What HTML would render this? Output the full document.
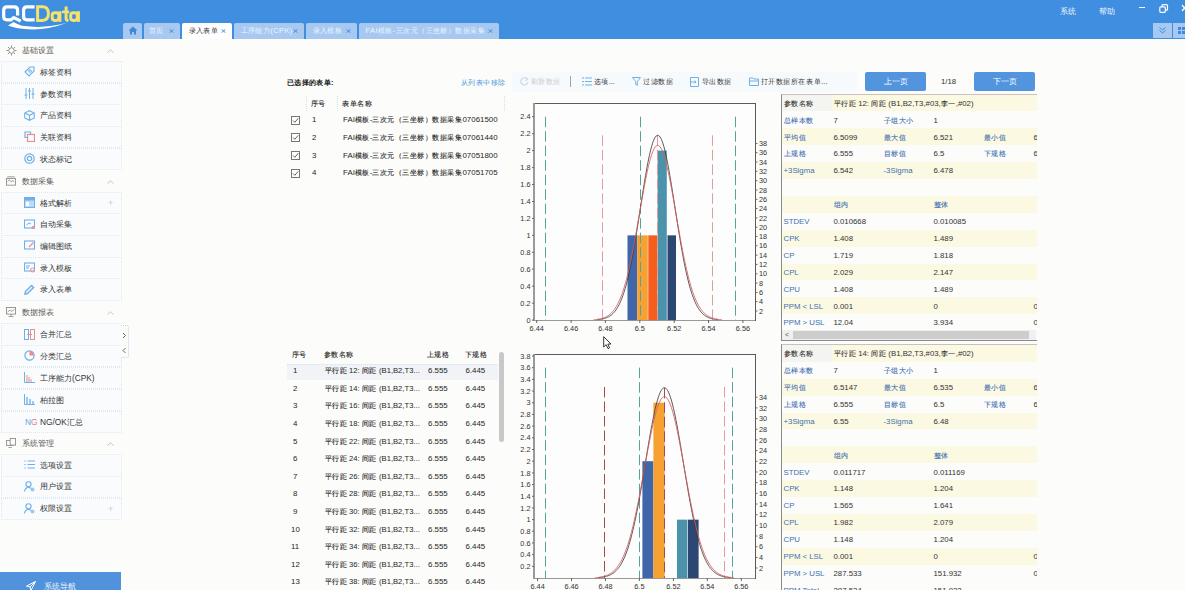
<!DOCTYPE html>
<html><head><meta charset="utf-8">
<style>
*{box-sizing:border-box;margin:0;padding:0}
html,body{width:1185px;height:590px;overflow:hidden;background:#fcfcfa;font-family:"Liberation Sans",sans-serif;color:#333;font-size:7.5px}
.a{position:absolute;white-space:nowrap;line-height:1}
#hdr{position:absolute;left:0;top:0;width:1185px;height:38.5px;background:#3f8ee0}
.tab{position:absolute;top:22.5px;height:16px;background:#a7c9f1;color:#eef5fd;font-size:7.4px;letter-spacing:0.45px;line-height:16px;padding-left:6.5px;border-radius:2px 2px 0 0;white-space:nowrap}
.tab .x{position:absolute;right:6.5px;top:6.5px;width:5px;height:4px}
.tab.act{background:#fff;color:#333}
.sh{position:absolute;left:0;width:122px;height:22px;font-size:8.3px;color:#555;line-height:22px;white-space:nowrap}
.si{position:absolute;left:1px;width:121px;height:22.6px;font-size:8.3px;color:#333;line-height:22px;white-space:nowrap;border:1px dotted #dfe8f3;background:#fafbfd}
.sic{position:absolute;left:21.5px;top:4.3px;width:11px;height:11px}
.sit{position:absolute;left:38px;top:-1.2px}
.chev{position:absolute;left:106px;top:0;color:#aaa;font-size:8px}
.tb{position:absolute;white-space:nowrap;line-height:1;font-size:7.4px;color:#333}
.btn{position:absolute;top:72px;height:19px;width:61px;background:#5295de;border-radius:2px;color:#fff;font-size:7.8px;line-height:19px;text-align:center}
.t1{position:absolute;white-space:nowrap;line-height:1;font-size:7.9px;color:#262626}
.t1 .c{font-size:7.4px;letter-spacing:0.5px;-webkit-text-stroke:0.12px currentColor}
.pl .c,.pv .c{font-size:7.4px;letter-spacing:0.5px;-webkit-text-stroke:0.1px currentColor}
.tb .c{font-size:7.4px;letter-spacing:0.6px}
.pl{position:absolute;white-space:nowrap;line-height:1;font-size:7.8px;color:#3d70b0}
.pv{position:absolute;white-space:nowrap;line-height:1;font-size:7.8px;color:#333}
</style></head><body>
<div id="hdr"><svg style="position:absolute;left:0;top:0" width="90" height="36" viewBox="0 0 90 36">
<path d="M17.6 15.5 V10.2 Q17.6 6.9 14.3 6.9 H7 Q3.7 6.9 3.7 10.2 V16.6 Q3.7 19.9 7 19.9 H10.8 L13.8 17.6 L20.8 21.2" fill="none" stroke="#fff" stroke-width="3.2" stroke-linejoin="round"/>
<path d="M34.6 6.9 H26.9 Q23.6 6.9 23.6 10.2 V16.6 Q23.6 19.9 26.9 19.9 H34.6" fill="none" stroke="#fff" stroke-width="3.2"/>
<path d="M8 25.6 L13.5 22 Q16 23.5 22 25.8 Q45 29 67 22.8 Q48 30.2 28 29.3 Q15 28.6 8 25.6 Z" fill="#fff"/>
<path d="M37.6 6.7 H42.3 Q48.4 6.7 48.4 13.5 Q48.4 20.4 42.3 20.4 H37.6 Z" fill="none" stroke="#f3e36b" stroke-width="3"/>
<rect x="52.2" y="12.7" width="6.6" height="7.7" rx="2.6" fill="none" stroke="#f3e36b" stroke-width="3"/>
<rect x="58.5" y="11.2" width="2.9" height="10.7" fill="#f3e36b"/>
<path d="M66.1 6.6 V18.5 Q66.1 20.4 68.5 20.6" fill="none" stroke="#f3e36b" stroke-width="3"/>
<rect x="62" y="10.6" width="7.2" height="2.6" fill="#f3e36b"/>
<rect x="70.7" y="12.7" width="6.6" height="7.7" rx="2.6" fill="none" stroke="#f3e36b" stroke-width="3"/>
<rect x="77" y="11.2" width="2.9" height="10.7" fill="#f3e36b"/>
</svg><div class="tab" style="left:123px;width:19px;padding:0"><svg style="position:absolute;left:5px;top:3px" width="10" height="9" viewBox="0 0 10 9"><path d="M5 0.5 L0.5 4.5 H2 V8.5 H4 V6 H6 V8.5 H8 V4.5 H9.5 Z" fill="#3f89dc"/></svg></div><div class="tab" style="left:144px;width:36px;padding-left:4.6px">首页<svg class="x" viewBox="0 0 5 4"><path d="M0.5 0.3 L4.5 3.7 M4.5 0.3 L0.5 3.7" stroke="#3f89dc" stroke-width="0.9"/></svg></div><div class="tab act" style="left:182px;width:50px">录入表单<svg class="x" viewBox="0 0 5 4"><path d="M0.5 0.3 L4.5 3.7 M4.5 0.3 L0.5 3.7" stroke="#3f89dc" stroke-width="0.9"/></svg></div><div class="tab" style="left:234px;width:70px">工序能力(CPK)<svg class="x" viewBox="0 0 5 4"><path d="M0.5 0.3 L4.5 3.7 M4.5 0.3 L0.5 3.7" stroke="#3f89dc" stroke-width="0.9"/></svg></div><div class="tab" style="left:306px;width:51px">录入模板<svg class="x" viewBox="0 0 5 4"><path d="M0.5 0.3 L4.5 3.7 M4.5 0.3 L0.5 3.7" stroke="#3f89dc" stroke-width="0.9"/></svg></div><div class="tab" style="left:359px;width:140px">FAI模板-三次元（三坐标）数据采集<svg class="x" viewBox="0 0 5 4"><path d="M0.5 0.3 L4.5 3.7 M4.5 0.3 L0.5 3.7" stroke="#3f89dc" stroke-width="0.9"/></svg></div><div class="a" style="left:1060px;top:7px;color:#f4f8fd;font-size:8.3px">系统</div><div class="a" style="left:1099px;top:7px;color:#f4f8fd;font-size:8.3px">帮助</div><div style="position:absolute;left:1139px;top:7px;width:6px;height:1px;background:#fff"></div><svg style="position:absolute;left:1159px;top:4px" width="10" height="9" viewBox="0 0 10 9"><rect x="3" y="0.7" width="5.5" height="5.5" rx="1" fill="none" stroke="#fff" stroke-width="1.2"/><rect x="0.8" y="2.8" width="5.5" height="5.5" rx="1" fill="#3f8ee0" stroke="#fff" stroke-width="1.2"/></svg><svg style="position:absolute;left:1181px;top:4px" width="6" height="8" viewBox="0 0 6 8"><path d="M1 1 L6 7 M6 1 L1 7" stroke="#fff" stroke-width="1.2"/></svg><div style="position:absolute;left:1153px;top:23px;width:19px;height:15px;background:#a7c9f1"><svg style="position:absolute;left:6px;top:4px" width="7" height="7" viewBox="0 0 7 7"><path d="M0.5 0.5 L3.5 3 L6.5 0.5 M0.5 3.5 L3.5 6 L6.5 3.5" fill="none" stroke="#3f89dc" stroke-width="1"/></svg></div><div style="position:absolute;left:1173px;top:23px;width:14px;height:15px;background:#a7c9f1"><svg style="position:absolute;left:5px;top:4px" width="8" height="8"><rect x="0" y="0" width="3" height="3" fill="#3f89dc"/><rect x="4" y="0" width="3" height="3" fill="#3f89dc"/><rect x="0" y="4" width="3" height="3" fill="#3f89dc"/><rect x="4" y="4" width="3" height="3" fill="#3f89dc"/></svg></div></div><div class="sh" style="top:39px"><svg class="sic" style="left:5.5px;top:6px;width:11px;height:11px" viewBox="0 0 12 12"><circle cx="6" cy="6" r="3" fill="none" stroke="#888" stroke-width="1"/><path d="M6 0.5V2.5M6 9.5V11.5M0.5 6H2.5M9.5 6H11.5M2.1 2.1L3.5 3.5M8.5 8.5L9.9 9.9M2.1 9.9L3.5 8.5M8.5 3.5L9.9 2.1" stroke="#888" stroke-width="1"/></svg><span style="position:absolute;left:22px;top:0">基础设置</span><svg style="position:absolute;left:106.5px;top:9.5px" width="7" height="4" viewBox="0 0 7 4"><path d="M0.5 3.5 L3.5 0.8 L6.5 3.5" fill="none" stroke="#c4c4c4" stroke-width="1"/></svg></div><div class="si" style="top:60.7px"><svg class="sic" viewBox="0 0 11 11"><path d="M1 6 L6 1 H10 V5 L5 10 Z" fill="none" stroke="#6eb0e8" stroke-width="1.1"/><circle cx="6" cy="5" r="1.3" fill="none" stroke="#6eb0e8"/></svg><span class="sit">标签资料</span></div><div class="si" style="top:82.7px"><svg class="sic" viewBox="0 0 11 11"><path d="M2 0V11M5.5 0V11M9 0V11" stroke="#6eb0e8" stroke-width="1"/><path d="M0.5 7H3.5M4 3H7M7.5 6H10.5" stroke="#6eb0e8" stroke-width="1.2"/></svg><span class="sit">参数资料</span></div><div class="si" style="top:104.3px"><svg class="sic" viewBox="0 0 11 11"><path d="M5.5 0.7 L10.3 3 V8 L5.5 10.3 L0.7 8 V3 Z M0.7 3 L5.5 5.3 L10.3 3 M5.5 5.3 V10.3" fill="none" stroke="#6eb0e8" stroke-width="1.1"/></svg><span class="sit">产品资料</span></div><div class="si" style="top:125.7px"><svg class="sic" viewBox="0 0 11 11"><path d="M6.5 3 V1 H1 V6.5 H3" fill="none" stroke="#6eb0e8" stroke-width="1.2"/><rect x="3.5" y="3.5" width="7" height="7" fill="none" stroke="#e88e8e" stroke-width="1.2"/></svg><span class="sit">关联资料</span></div><div class="si" style="top:147.7px"><svg class="sic" viewBox="0 0 11 11"><circle cx="5.5" cy="5.5" r="4.7" fill="none" stroke="#6eb0e8" stroke-width="1.2"/><circle cx="5.5" cy="5.5" r="2.2" fill="none" stroke="#6eb0e8" stroke-width="1.2"/></svg><span class="sit">状态标记</span></div><div class="sh" style="top:170.4px"><svg class="sic" style="left:6px;top:6px;width:10px;height:10px" viewBox="0 0 12 11"><rect x="0.5" y="2.5" width="11" height="8" fill="none" stroke="#888"/><path d="M1.5 0.5H10.5M2 6 L4 4 L6 6.5 L8 5 L10 6.5" fill="none" stroke="#888"/></svg><span style="position:absolute;left:22px;top:0">数据采集</span><svg style="position:absolute;left:106.5px;top:9.5px" width="7" height="4" viewBox="0 0 7 4"><path d="M0.5 3.5 L3.5 0.8 L6.5 3.5" fill="none" stroke="#c4c4c4" stroke-width="1"/></svg></div><div class="si" style="top:191.7px"><svg class="sic" viewBox="0 0 11 11"><rect x="0.5" y="0.5" width="10" height="10" fill="#bcdcf5" stroke="#6eb0e8"/><rect x="0.5" y="0.5" width="10" height="3" fill="#6eb0e8"/><rect x="2" y="5" width="3" height="4" fill="#fff"/></svg><span class="sit">格式解析</span><span style="position:absolute;left:106px;top:-1px;color:#ccc;font-size:9px">+</span></div><div class="si" style="top:213.39999999999998px"><svg class="sic" viewBox="0 0 11 11"><rect x="0.5" y="1" width="10" height="8" fill="none" stroke="#6eb0e8" stroke-width="1.1"/><path d="M2.5 6 L5 4 L7 5" stroke="#6eb0e8" fill="none"/><circle cx="9" cy="8.5" r="1.6" fill="#e88e8e"/></svg><span class="sit">自动采集</span></div><div class="si" style="top:235.0px"><svg class="sic" viewBox="0 0 11 11"><rect x="0.5" y="1" width="10" height="8" fill="none" stroke="#6eb0e8" stroke-width="1.1"/><path d="M5 7 L9.5 2.5" stroke="#e88e8e" stroke-width="1.2"/></svg><span class="sit">编辑图纸</span></div><div class="si" style="top:256.7px"><svg class="sic" viewBox="0 0 11 11"><rect x="0.5" y="1" width="10" height="8" fill="none" stroke="#6eb0e8" stroke-width="1.1"/><path d="M2 4H6M2 6H5" stroke="#6eb0e8"/><circle cx="8.5" cy="8" r="2" fill="none" stroke="#e88e8e"/></svg><span class="sit">录入模板</span></div><div class="si" style="top:278.3px"><svg class="sic" viewBox="0 0 11 11"><path d="M1 10 L1.5 7.5 L7.5 1.5 L9.5 3.5 L3.5 9.5 Z" fill="none" stroke="#6eb0e8" stroke-width="1.5"/></svg><span class="sit">录入表单</span></div><div class="sh" style="top:301px"><svg class="sic" style="left:6px;top:6px;width:10px;height:10px" viewBox="0 0 12 12"><rect x="0.5" y="0.5" width="11" height="8" fill="none" stroke="#888"/><path d="M6 8.5V11M3 11.5H9M2 6L5 3.5L7 5.5L10 2.5" fill="none" stroke="#888"/></svg><span style="position:absolute;left:22px;top:0">数据报表</span><svg style="position:absolute;left:106.5px;top:9.5px" width="7" height="4" viewBox="0 0 7 4"><path d="M0.5 3.5 L3.5 0.8 L6.5 3.5" fill="none" stroke="#c4c4c4" stroke-width="1"/></svg></div><div class="si" style="top:323.4px"><svg class="sic" viewBox="0 0 11 11"><rect x="0.5" y="0.5" width="4" height="10" fill="none" stroke="#6eb0e8"/><rect x="6.5" y="0.5" width="4" height="10" fill="none" stroke="#e88e8e"/><path d="M3 5.5H8" stroke="#e88e8e"/></svg><span class="sit">合并汇总</span></div><div class="si" style="top:344.7px"><svg class="sic" viewBox="0 0 11 11"><circle cx="5.5" cy="5.5" r="4.6" fill="none" stroke="#6eb0e8" stroke-width="1.2"/><path d="M5.5 5.5 V0.9 A4.6 4.6 0 0 1 10.1 5.5 Z" fill="#e88e8e"/></svg><span class="sit">分类汇总</span></div><div class="si" style="top:366.7px"><svg class="sic" viewBox="0 0 11 11"><path d="M0.5 0 V10.5 H11" fill="none" stroke="#6eb0e8"/><path d="M3 10V3M5 10V5M7 10V7" stroke="#e88e8e"/></svg><span class="sit">工序能力(CPK)</span></div><div class="si" style="top:388.7px"><svg class="sic" viewBox="0 0 11 11"><path d="M0.5 0 V10.5 H11" fill="none" stroke="#6eb0e8"/><rect x="2" y="3" width="2" height="7" fill="#9cc8ef"/><rect x="5" y="5" width="2" height="5" fill="#9cc8ef"/><rect x="8" y="7" width="2" height="3" fill="#9cc8ef"/></svg><span class="sit">柏拉图</span></div><div class="si" style="top:410.7px"><span style="position:absolute;left:23px;top:-1.2px;font-size:8.3px;color:#5aa6e6">N<span style="color:#e57a7a">G</span></span><span class="sit">NG/OK汇总</span></div><div class="sh" style="top:432.4px"><svg class="sic" style="left:6px;top:6px;width:10px;height:10px" viewBox="0 0 12 12"><rect x="0.5" y="3" width="8" height="6" fill="none" stroke="#888"/><rect x="5" y="0.5" width="6.5" height="8" fill="#fcfcfa" stroke="#888"/><path d="M3 11.5H7" stroke="#888"/></svg><span style="position:absolute;left:22px;top:0">系统管理</span><svg style="position:absolute;left:106.5px;top:9.5px" width="7" height="4" viewBox="0 0 7 4"><path d="M0.5 3.5 L3.5 0.8 L6.5 3.5" fill="none" stroke="#c4c4c4" stroke-width="1"/></svg></div><div class="si" style="top:454.09999999999997px"><svg class="sic" viewBox="0 0 11 11"><path d="M0 2H2M0 5.5H2M0 9H2" stroke="#9cc8ef" stroke-width="1.2"/><path d="M3.5 2H11M3.5 5.5H11M3.5 9H11" stroke="#6eb0e8" stroke-width="1.2"/></svg><span class="sit">选项设置</span></div><div class="si" style="top:475.5px"><svg class="sic" viewBox="0 0 11 11"><circle cx="4.5" cy="3.3" r="2.6" fill="none" stroke="#6eb0e8" stroke-width="1.1"/><path d="M0.5 10.5 Q1 6.5 4.5 6.5 Q6 6.5 7 7.3" fill="none" stroke="#6eb0e8" stroke-width="1.1"/><circle cx="8.5" cy="8.5" r="2" fill="#9cc8ef"/></svg><span class="sit">用户设置</span></div><div class="si" style="top:497.5px"><svg class="sic" viewBox="0 0 11 11"><circle cx="4.5" cy="3.3" r="2.6" fill="none" stroke="#6eb0e8" stroke-width="1.1"/><path d="M0.5 10.5 Q1 6.5 4.5 6.5 Q6 6.5 7 7.3" fill="none" stroke="#6eb0e8" stroke-width="1.1"/><circle cx="8.5" cy="8.5" r="2" fill="#9cc8ef"/></svg><span class="sit">权限设置</span><span style="position:absolute;left:106px;top:-1px;color:#ccc;font-size:9px">+</span></div><div style="position:absolute;left:121px;top:325px;width:8px;height:33px;border:1px dotted #bcd3ea;border-left:none;background:#fcfcfa;border-radius:0 2px 2px 0"><svg style="position:absolute;left:1px;top:6px" width="5" height="22" viewBox="0 0 5 22"><path d="M1 1 L3.5 3.5 L1 6" fill="none" stroke="#666"/><path d="M3.5 16 L1 18.5 L3.5 21" fill="none" stroke="#666"/></svg></div><div style="position:absolute;left:0;top:571.8px;width:121px;height:19px;background:#5093dc"><svg style="position:absolute;left:26px;top:9.5px" width="10" height="10" viewBox="0 0 10 10"><path d="M9.5 0.5 L0.5 5 L4 6 L5 9.5 Z M4 6 L9.5 0.5" fill="none" stroke="#fff" stroke-width="1"/></svg><span class="a" style="left:44px;top:10.5px;color:#eef5fd;font-size:8.3px">系统导航</span></div><div class="a" style="left:287px;top:79px;font-size:7.4px;letter-spacing:0.35px;font-weight:bold;color:#222">已选择的表单<span style="letter-spacing:0">:</span></div><div class="a" style="left:460.5px;top:79px;font-size:7.4px;letter-spacing:0.55px;color:#4a9ae0">从列表中移除</div><div style="position:absolute;left:512px;top:72px;width:345px;height:20px;background:#f7fafd"></div><svg style="position:absolute;left:520px;top:77px" width="9" height="9" viewBox="0 0 9 9"><path d="M7.5 2.5 A3.6 3.6 0 1 0 8 5" fill="none" stroke="#c5d6ea" stroke-width="1.1"/><path d="M6 0.5 L8 2.5 L5.5 3.5" fill="none" stroke="#c5d6ea" stroke-width="1"/></svg><div class="tb" style="left:530.5px;top:78px;color:#ccc"><span class="c">刷新数据</span></div><div style="position:absolute;left:570px;top:76px;width:1px;height:11px;background:#9aa6b3"></div><svg style="position:absolute;left:581.5px;top:77px" width="10" height="9" viewBox="0 0 10 9"><path d="M0 1H2M0 4.5H2M0 8H2M3 1H10M3 4.5H10M3 8H10" stroke="#6eb0e8" stroke-width="1.1"/></svg><div class="tb" style="left:593.5px;top:78px"><span class="c">选项</span>...</div><svg style="position:absolute;left:631.5px;top:77px" width="9" height="9" viewBox="0 0 9 9"><path d="M0.5 0.5 H8.5 L5.3 4.5 V8.5 L3.7 7.5 V4.5 Z" fill="none" stroke="#6eb0e8" stroke-width="1"/></svg><div class="tb" style="left:643px;top:78px"><span class="c">过滤数据</span></div><svg style="position:absolute;left:690px;top:76.5px" width="9" height="10" viewBox="0 0 9 10"><path d="M0.5 0.5 H8.5 V9.5 H0.5 Z M0.5 5 H6 M4.5 3.5 L6 5 L4.5 6.5" fill="none" stroke="#6eb0e8" stroke-width="1"/></svg><div class="tb" style="left:701.5px;top:78px"><span class="c">导出数据</span></div><svg style="position:absolute;left:748.5px;top:77px" width="10" height="9" viewBox="0 0 10 9"><path d="M0.5 1 H4 L5 2 H9.5 V8.5 H0.5 Z M0.5 4 H9.5" fill="none" stroke="#6eb0e8" stroke-width="1"/></svg><div class="tb" style="left:760.5px;top:78px"><span class="c">打开数据所在表单</span>...</div><div class="btn" style="left:865px">上一页</div><div class="tb" style="left:941px;top:78px;font-size:7.8px">1/18</div><div class="btn" style="left:974px">下一页</div><div style="position:absolute;left:306px;top:96px;height:15px;border-left:1px dotted #cfe0f2"></div><div style="position:absolute;left:337px;top:96px;height:15px;border-left:1px dotted #cfe0f2"></div><div style="position:absolute;left:504px;top:96px;height:15px;border-left:1px dotted #cfe0f2"></div><div class="t1" style="left:310.5px;top:100px"><span class="c">序号</span></div><div class="t1" style="left:342px;top:100px"><span class="c">表单名称</span></div><svg style="position:absolute;left:291px;top:115.7px" width="9" height="9" viewBox="0 0 9 9"><rect x="0.5" y="0.5" width="8" height="8" fill="#fff" stroke="#777" stroke-width="1"/><path d="M2 4.5 L3.8 6.3 L7.3 2.3" fill="none" stroke="#555" stroke-width="0.9"/></svg><div class="t1" style="left:312px;top:116.4px">1</div><div class="t1" style="left:343px;top:116.4px">FAI<span class="c">模板</span>-<span class="c">三次元（三坐标）数据采集</span>07061500</div><svg style="position:absolute;left:291px;top:133.3px" width="9" height="9" viewBox="0 0 9 9"><rect x="0.5" y="0.5" width="8" height="8" fill="#fff" stroke="#777" stroke-width="1"/><path d="M2 4.5 L3.8 6.3 L7.3 2.3" fill="none" stroke="#555" stroke-width="0.9"/></svg><div class="t1" style="left:312px;top:134.0px">2</div><div class="t1" style="left:343px;top:134.0px">FAI<span class="c">模板</span>-<span class="c">三次元（三坐标）数据采集</span>07061440</div><svg style="position:absolute;left:291px;top:150.9px" width="9" height="9" viewBox="0 0 9 9"><rect x="0.5" y="0.5" width="8" height="8" fill="#fff" stroke="#777" stroke-width="1"/><path d="M2 4.5 L3.8 6.3 L7.3 2.3" fill="none" stroke="#555" stroke-width="0.9"/></svg><div class="t1" style="left:312px;top:151.6px">3</div><div class="t1" style="left:343px;top:151.6px">FAI<span class="c">模板</span>-<span class="c">三次元（三坐标）数据采集</span>07051800</div><svg style="position:absolute;left:291px;top:168.5px" width="9" height="9" viewBox="0 0 9 9"><rect x="0.5" y="0.5" width="8" height="8" fill="#fff" stroke="#777" stroke-width="1"/><path d="M2 4.5 L3.8 6.3 L7.3 2.3" fill="none" stroke="#555" stroke-width="0.9"/></svg><div class="t1" style="left:312px;top:169.2px">4</div><div class="t1" style="left:343px;top:169.2px">FAI<span class="c">模板</span>-<span class="c">三次元（三坐标）数据采集</span>07051705</div><div class="t1" style="left:291.5px;top:350.5px"><span class="c">序号</span></div><div class="t1" style="left:323.5px;top:350.5px"><span class="c">参数名称</span></div><div class="t1" style="left:426.5px;top:350.5px"><span class="c">上规格</span></div><div class="t1" style="left:464.5px;top:350.5px"><span class="c">下规格</span></div><div style="position:absolute;left:287px;top:364px;width:211px;height:16px;background:#f1f3f7;border-top:1px dotted #d5e3f0"></div><div class="t1" style="left:293px;top:367.2px">1</div><div class="t1" style="left:324.5px;top:367.2px;font-size:7.65px"><span class="c">平行距</span> 12: <span class="c">间距</span> (B1,B2,T3...</div><div class="t1" style="left:428px;top:367.2px">6.555</div><div class="t1" style="left:465.5px;top:367.2px">6.445</div><div class="t1" style="left:293px;top:384.8px">2</div><div class="t1" style="left:324.5px;top:384.8px;font-size:7.65px"><span class="c">平行距</span> 14: <span class="c">间距</span> (B1,B2,T3...</div><div class="t1" style="left:428px;top:384.8px">6.555</div><div class="t1" style="left:465.5px;top:384.8px">6.445</div><div class="t1" style="left:293px;top:402.4px">3</div><div class="t1" style="left:324.5px;top:402.4px;font-size:7.65px"><span class="c">平行距</span> 16: <span class="c">间距</span> (B1,B2,T3...</div><div class="t1" style="left:428px;top:402.4px">6.555</div><div class="t1" style="left:465.5px;top:402.4px">6.445</div><div class="t1" style="left:293px;top:420.0px">4</div><div class="t1" style="left:324.5px;top:420.0px;font-size:7.65px"><span class="c">平行距</span> 18: <span class="c">间距</span> (B1,B2,T3...</div><div class="t1" style="left:428px;top:420.0px">6.555</div><div class="t1" style="left:465.5px;top:420.0px">6.445</div><div class="t1" style="left:293px;top:437.59999999999997px">5</div><div class="t1" style="left:324.5px;top:437.59999999999997px;font-size:7.65px"><span class="c">平行距</span> 22: <span class="c">间距</span> (B1,B2,T3...</div><div class="t1" style="left:428px;top:437.59999999999997px">6.555</div><div class="t1" style="left:465.5px;top:437.59999999999997px">6.445</div><div class="t1" style="left:293px;top:455.2px">6</div><div class="t1" style="left:324.5px;top:455.2px;font-size:7.65px"><span class="c">平行距</span> 24: <span class="c">间距</span> (B1,B2,T3...</div><div class="t1" style="left:428px;top:455.2px">6.555</div><div class="t1" style="left:465.5px;top:455.2px">6.445</div><div class="t1" style="left:293px;top:472.8px">7</div><div class="t1" style="left:324.5px;top:472.8px;font-size:7.65px"><span class="c">平行距</span> 26: <span class="c">间距</span> (B1,B2,T3...</div><div class="t1" style="left:428px;top:472.8px">6.555</div><div class="t1" style="left:465.5px;top:472.8px">6.445</div><div class="t1" style="left:293px;top:490.40000000000003px">8</div><div class="t1" style="left:324.5px;top:490.40000000000003px;font-size:7.65px"><span class="c">平行距</span> 28: <span class="c">间距</span> (B1,B2,T3...</div><div class="t1" style="left:428px;top:490.40000000000003px">6.555</div><div class="t1" style="left:465.5px;top:490.40000000000003px">6.445</div><div class="t1" style="left:293px;top:508.0px">9</div><div class="t1" style="left:324.5px;top:508.0px;font-size:7.65px"><span class="c">平行距</span> 30: <span class="c">间距</span> (B1,B2,T3...</div><div class="t1" style="left:428px;top:508.0px">6.555</div><div class="t1" style="left:465.5px;top:508.0px">6.445</div><div class="t1" style="left:291px;top:525.6px">10</div><div class="t1" style="left:324.5px;top:525.6px;font-size:7.65px"><span class="c">平行距</span> 32: <span class="c">间距</span> (B1,B2,T3...</div><div class="t1" style="left:428px;top:525.6px">6.555</div><div class="t1" style="left:465.5px;top:525.6px">6.445</div><div class="t1" style="left:291px;top:543.2px">11</div><div class="t1" style="left:324.5px;top:543.2px;font-size:7.65px"><span class="c">平行距</span> 34: <span class="c">间距</span> (B1,B2,T3...</div><div class="t1" style="left:428px;top:543.2px">6.555</div><div class="t1" style="left:465.5px;top:543.2px">6.445</div><div class="t1" style="left:291px;top:560.8000000000001px">12</div><div class="t1" style="left:324.5px;top:560.8000000000001px;font-size:7.65px"><span class="c">平行距</span> 36: <span class="c">间距</span> (B1,B2,T3...</div><div class="t1" style="left:428px;top:560.8000000000001px">6.555</div><div class="t1" style="left:465.5px;top:560.8000000000001px">6.445</div><div class="t1" style="left:291px;top:578.4000000000001px">13</div><div class="t1" style="left:324.5px;top:578.4000000000001px;font-size:7.65px"><span class="c">平行距</span> 38: <span class="c">间距</span> (B1,B2,T3...</div><div class="t1" style="left:428px;top:578.4000000000001px">6.555</div><div class="t1" style="left:465.5px;top:578.4000000000001px">6.445</div><div style="position:absolute;left:498.5px;top:352px;width:5px;height:90px;background:#c8c8c8;border-radius:2.5px"></div><svg style="position:absolute;left:0;top:0" width="1185" height="590" viewBox="0 0 1185 590" font-family="Liberation Sans" font-size="7.3" fill="#333"><rect x="534.5" y="103.5" width="221" height="217" fill="#fdfdfd" stroke="#5a5a5a" stroke-width="1"/><line x1="534" y1="103" x2="534" y2="321" stroke="#9a9a9a" stroke-width="2"/><line x1="534" y1="320.5" x2="755" y2="320.5" stroke="#999" stroke-width="1.2"/><rect x="627.5" y="235.35000000000002" width="9.700000000000045" height="84.75" fill="#3f66a8"/><rect x="637.2" y="235.35000000000002" width="10.599999999999909" height="84.75" fill="#f7a133"/><rect x="648.3" y="235.35000000000002" width="8.900000000000091" height="84.75" fill="#f45d1b"/><rect x="657.6" y="150.60000000000002" width="9.199999999999932" height="169.5" fill="#4a93ab"/><rect x="667.5" y="235.35000000000002" width="8.5" height="84.75" fill="#2c4872"/><line x1="545.5" y1="116.70000000000007" x2="545.5" y2="320" stroke="#55a596" stroke-width="1" stroke-dasharray="10.5 4"/><line x1="640.5" y1="116.70000000000007" x2="640.5" y2="320" stroke="#55a596" stroke-width="1" stroke-dasharray="10.5 4"/><line x1="735.5" y1="116.70000000000007" x2="735.5" y2="320" stroke="#55a596" stroke-width="1" stroke-dasharray="10.5 4"/><line x1="602.5" y1="135.34500000000003" x2="602.5" y2="320" stroke="#e29c9c" stroke-width="1" stroke-dasharray="10.5 4"/><line x1="712.5" y1="135.34500000000003" x2="712.5" y2="320" stroke="#e29c9c" stroke-width="1" stroke-dasharray="10.5 4"/><line x1="657.50" y1="135.3" x2="657.50" y2="320" stroke="#e29a9a" stroke-width="1" stroke-dasharray="10.5 4"/><polyline points="597.06,319.70 597.82,319.63 598.58,319.55 599.34,319.47 600.10,319.37 600.86,319.25 601.61,319.12 602.37,318.97 603.13,318.81 603.89,318.62 604.65,318.40 605.40,318.16 606.16,317.89 606.92,317.58 607.68,317.24 608.44,316.86 609.20,316.43 609.95,315.96 610.71,315.43 611.47,314.85 612.23,314.21 612.99,313.50 613.75,312.71 614.50,311.85 615.26,310.91 616.02,309.88 616.78,308.76 617.54,307.53 618.29,306.21 619.05,304.77 619.81,303.21 620.57,301.53 621.33,299.73 622.09,297.79 622.84,295.71 623.60,293.49 624.36,291.13 625.12,288.61 625.88,285.94 626.64,283.12 627.39,280.14 628.15,277.00 628.91,273.70 629.67,270.25 630.43,266.64 631.18,262.88 631.94,258.98 632.70,254.93 633.46,250.74 634.22,246.43 634.98,242.01 635.73,237.47 636.49,232.84 637.25,228.12 638.01,223.33 638.77,218.49 639.53,213.62 640.28,208.72 641.04,203.82 641.80,198.93 642.56,194.08 643.32,189.29 644.07,184.57 644.83,179.96 645.59,175.46 646.35,171.11 647.11,166.91 647.87,162.90 648.62,159.10 649.38,155.51 650.14,152.17 650.90,149.09 651.66,146.28 652.42,143.77 653.17,141.56 653.93,139.67 654.69,138.11 655.45,136.89 656.21,136.01 656.96,135.48 657.72,135.31 658.48,135.48 659.24,136.01 660.00,136.89 660.76,138.11 661.51,139.67 662.27,141.56 663.03,143.77 663.79,146.28 664.55,149.09 665.31,152.17 666.06,155.51 666.82,159.10 667.58,162.90 668.34,166.91 669.10,171.11 669.85,175.46 670.61,179.96 671.37,184.57 672.13,189.29 672.89,194.08 673.65,198.93 674.40,203.82 675.16,208.72 675.92,213.62 676.68,218.49 677.44,223.33 678.20,228.12 678.95,232.84 679.71,237.47 680.47,242.01 681.23,246.43 681.99,250.74 682.74,254.93 683.50,258.98 684.26,262.88 685.02,266.64 685.78,270.25 686.54,273.70 687.29,277.00 688.05,280.14 688.81,283.12 689.57,285.94 690.33,288.61 691.09,291.13 691.84,293.49 692.60,295.71 693.36,297.79 694.12,299.73 694.88,301.53 695.63,303.21 696.39,304.77 697.15,306.21 697.91,307.53 698.67,308.76 699.43,309.88 700.18,310.91 700.94,311.85 701.70,312.71 702.46,313.50 703.22,314.21 703.98,314.85 704.73,315.43 705.49,315.96 706.25,316.43 707.01,316.86 707.77,317.24 708.52,317.58 709.28,317.89 710.04,318.16 710.80,318.40 711.56,318.62 712.32,318.81 713.07,318.97 713.83,319.12 714.59,319.25 715.35,319.37 716.11,319.47 716.87,319.55 717.62,319.63 718.38,319.70" fill="none" stroke="#3c3c3c" stroke-width="0.85"/><polyline points="593.56,319.72 594.36,319.66 595.16,319.58 595.96,319.50 596.77,319.41 597.57,319.30 598.37,319.17 599.17,319.03 599.97,318.88 600.78,318.70 601.58,318.49 602.38,318.27 603.18,318.01 603.98,317.72 604.79,317.40 605.59,317.04 606.39,316.63 607.19,316.19 608.00,315.69 608.80,315.14 609.60,314.53 610.40,313.86 611.20,313.12 612.01,312.30 612.81,311.41 613.61,310.44 614.41,309.38 615.21,308.22 616.02,306.97 616.82,305.60 617.62,304.13 618.42,302.55 619.22,300.84 620.03,299.01 620.83,297.04 621.63,294.95 622.43,292.71 623.23,290.33 624.04,287.81 624.84,285.14 625.64,282.32 626.44,279.35 627.24,276.24 628.05,272.97 628.85,269.56 629.65,266.01 630.45,262.32 631.25,258.49 632.06,254.53 632.86,250.46 633.66,246.27 634.46,241.99 635.27,237.61 636.07,233.15 636.87,228.62 637.67,224.05 638.47,219.44 639.28,214.80 640.08,210.17 640.88,205.55 641.68,200.97 642.48,196.44 643.29,191.98 644.09,187.62 644.89,183.36 645.69,179.25 646.49,175.28 647.30,171.49 648.10,167.89 648.90,164.51 649.70,161.35 650.50,158.44 651.31,155.78 652.11,153.41 652.91,151.32 653.71,149.53 654.51,148.06 655.32,146.90 656.12,146.07 656.92,145.57 657.72,145.40 658.53,145.57 659.33,146.07 660.13,146.90 660.93,148.06 661.73,149.53 662.54,151.32 663.34,153.41 664.14,155.78 664.94,158.44 665.74,161.35 666.55,164.51 667.35,167.89 668.15,171.49 668.95,175.28 669.75,179.25 670.56,183.36 671.36,187.62 672.16,191.98 672.96,196.44 673.76,200.97 674.57,205.55 675.37,210.17 676.17,214.80 676.97,219.44 677.77,224.05 678.58,228.62 679.38,233.15 680.18,237.61 680.98,241.99 681.79,246.27 682.59,250.46 683.39,254.53 684.19,258.49 684.99,262.32 685.80,266.01 686.60,269.56 687.40,272.97 688.20,276.24 689.00,279.35 689.81,282.32 690.61,285.14 691.41,287.81 692.21,290.33 693.01,292.71 693.82,294.95 694.62,297.04 695.42,299.01 696.22,300.84 697.02,302.55 697.83,304.13 698.63,305.60 699.43,306.97 700.23,308.22 701.03,309.38 701.84,310.44 702.64,311.41 703.44,312.30 704.24,313.12 705.05,313.86 705.85,314.53 706.65,315.14 707.45,315.69 708.25,316.19 709.06,316.63 709.86,317.04 710.66,317.40 711.46,317.72 712.26,318.01 713.07,318.27 713.87,318.49 714.67,318.70 715.47,318.88 716.27,319.03 717.08,319.17 717.88,319.30 718.68,319.41 719.48,319.50 720.28,319.58 721.09,319.66 721.89,319.72" fill="none" stroke="#dc5a5a" stroke-width="0.85"/><line x1="532" y1="320.1" x2="534" y2="320.1" stroke="#666" stroke-width="1"/><text x="530.5" y="322.7" text-anchor="end">0</text><line x1="532" y1="303.2" x2="534" y2="303.2" stroke="#666" stroke-width="1"/><text x="530.5" y="305.8" text-anchor="end">0.2</text><line x1="532" y1="286.2" x2="534" y2="286.2" stroke="#666" stroke-width="1"/><text x="530.5" y="288.8" text-anchor="end">0.4</text><line x1="532" y1="269.2" x2="534" y2="269.2" stroke="#666" stroke-width="1"/><text x="530.5" y="271.9" text-anchor="end">0.6</text><line x1="532" y1="252.3" x2="534" y2="252.3" stroke="#666" stroke-width="1"/><text x="530.5" y="254.9" text-anchor="end">0.8</text><line x1="532" y1="235.4" x2="534" y2="235.4" stroke="#666" stroke-width="1"/><text x="530.5" y="238.0" text-anchor="end">1</text><line x1="532" y1="218.4" x2="534" y2="218.4" stroke="#666" stroke-width="1"/><text x="530.5" y="221.0" text-anchor="end">1.2</text><line x1="532" y1="201.5" x2="534" y2="201.5" stroke="#666" stroke-width="1"/><text x="530.5" y="204.1" text-anchor="end">1.4</text><line x1="532" y1="184.5" x2="534" y2="184.5" stroke="#666" stroke-width="1"/><text x="530.5" y="187.1" text-anchor="end">1.6</text><line x1="532" y1="167.6" x2="534" y2="167.6" stroke="#666" stroke-width="1"/><text x="530.5" y="170.2" text-anchor="end">1.8</text><line x1="532" y1="150.6" x2="534" y2="150.6" stroke="#666" stroke-width="1"/><text x="530.5" y="153.2" text-anchor="end">2</text><line x1="532" y1="133.7" x2="534" y2="133.7" stroke="#666" stroke-width="1"/><text x="530.5" y="136.3" text-anchor="end">2.2</text><line x1="532" y1="116.7" x2="534" y2="116.7" stroke="#666" stroke-width="1"/><text x="530.5" y="119.3" text-anchor="end">2.4</text><line x1="536.7" y1="320" x2="536.7" y2="323" stroke="#666" stroke-width="1"/><text x="536.7" y="331" text-anchor="middle">6.44</text><line x1="571.1" y1="320" x2="571.1" y2="323" stroke="#666" stroke-width="1"/><text x="571.1" y="331" text-anchor="middle">6.46</text><line x1="605.4" y1="320" x2="605.4" y2="323" stroke="#666" stroke-width="1"/><text x="605.4" y="331" text-anchor="middle">6.48</text><line x1="639.8" y1="320" x2="639.8" y2="323" stroke="#666" stroke-width="1"/><text x="639.8" y="331" text-anchor="middle">6.5</text><line x1="674.2" y1="320" x2="674.2" y2="323" stroke="#666" stroke-width="1"/><text x="674.2" y="331" text-anchor="middle">6.52</text><line x1="708.5" y1="320" x2="708.5" y2="323" stroke="#666" stroke-width="1"/><text x="708.5" y="331" text-anchor="middle">6.54</text><line x1="742.9" y1="320" x2="742.9" y2="323" stroke="#666" stroke-width="1"/><text x="742.9" y="331" text-anchor="middle">6.56</text><line x1="755" y1="311.0" x2="757.5" y2="311.0" stroke="#666" stroke-width="1"/><text x="759" y="313.6">2</text><line x1="755" y1="301.7" x2="757.5" y2="301.7" stroke="#666" stroke-width="1"/><text x="759" y="304.3">4</text><line x1="755" y1="292.4" x2="757.5" y2="292.4" stroke="#666" stroke-width="1"/><text x="759" y="295.0">6</text><line x1="755" y1="283.1" x2="757.5" y2="283.1" stroke="#666" stroke-width="1"/><text x="759" y="285.7">8</text><line x1="755" y1="273.8" x2="757.5" y2="273.8" stroke="#666" stroke-width="1"/><text x="759" y="276.4">10</text><line x1="755" y1="264.4" x2="757.5" y2="264.4" stroke="#666" stroke-width="1"/><text x="759" y="267.0">12</text><line x1="755" y1="255.1" x2="757.5" y2="255.1" stroke="#666" stroke-width="1"/><text x="759" y="257.7">14</text><line x1="755" y1="245.8" x2="757.5" y2="245.8" stroke="#666" stroke-width="1"/><text x="759" y="248.4">16</text><line x1="755" y1="236.5" x2="757.5" y2="236.5" stroke="#666" stroke-width="1"/><text x="759" y="239.1">18</text><line x1="755" y1="227.2" x2="757.5" y2="227.2" stroke="#666" stroke-width="1"/><text x="759" y="229.8">20</text><line x1="755" y1="217.9" x2="757.5" y2="217.9" stroke="#666" stroke-width="1"/><text x="759" y="220.5">22</text><line x1="755" y1="208.6" x2="757.5" y2="208.6" stroke="#666" stroke-width="1"/><text x="759" y="211.2">24</text><line x1="755" y1="199.3" x2="757.5" y2="199.3" stroke="#666" stroke-width="1"/><text x="759" y="201.9">26</text><line x1="755" y1="190.0" x2="757.5" y2="190.0" stroke="#666" stroke-width="1"/><text x="759" y="192.6">28</text><line x1="755" y1="180.7" x2="757.5" y2="180.7" stroke="#666" stroke-width="1"/><text x="759" y="183.2">30</text><line x1="755" y1="171.3" x2="757.5" y2="171.3" stroke="#666" stroke-width="1"/><text x="759" y="173.9">32</text><line x1="755" y1="162.0" x2="757.5" y2="162.0" stroke="#666" stroke-width="1"/><text x="759" y="164.6">34</text><line x1="755" y1="152.7" x2="757.5" y2="152.7" stroke="#666" stroke-width="1"/><text x="759" y="155.3">36</text><line x1="755" y1="143.4" x2="757.5" y2="143.4" stroke="#666" stroke-width="1"/><text x="759" y="146.0">38</text></svg><svg style="position:absolute;left:0;top:0" width="1185" height="590" viewBox="0 0 1185 590" font-family="Liberation Sans" font-size="7.3" fill="#333"><rect x="534.5" y="354.5" width="221" height="224" fill="#fdfdfd" stroke="#5a5a5a" stroke-width="1"/><line x1="534" y1="354" x2="534" y2="579" stroke="#9a9a9a" stroke-width="2"/><line x1="534" y1="578.5" x2="755" y2="578.5" stroke="#999" stroke-width="1.2"/><rect x="642.4" y="461.20000000000005" width="11.0" height="116.89999999999998" fill="#3f66a8"/><rect x="653.4" y="402.75" width="11.300000000000068" height="175.35000000000002" fill="#f7a133"/><rect x="677" y="519.65" width="10.299999999999955" height="58.450000000000045" fill="#4a93ab"/><rect x="687.9" y="519.65" width="10.700000000000045" height="58.450000000000045" fill="#2c4872"/><line x1="545.5" y1="367.68000000000006" x2="545.5" y2="578" stroke="#55a596" stroke-width="1" stroke-dasharray="10.5 4"/><line x1="639.5" y1="367.68000000000006" x2="639.5" y2="578" stroke="#55a596" stroke-width="1" stroke-dasharray="10.5 4"/><line x1="732.5" y1="367.68000000000006" x2="732.5" y2="578" stroke="#55a596" stroke-width="1" stroke-dasharray="10.5 4"/><line x1="604.5" y1="386.96850000000006" x2="604.5" y2="578" stroke="#a34a4a" stroke-width="1" stroke-dasharray="10.5 4"/><line x1="724.5" y1="386.96850000000006" x2="724.5" y2="578" stroke="#e29c9c" stroke-width="1" stroke-dasharray="10.5 4"/><line x1="664.50" y1="387.8" x2="664.50" y2="578" stroke="#a84a4a" stroke-width="1" stroke-dasharray="10.5 4"/><polyline points="598.05,577.68 598.87,577.62 599.70,577.54 600.53,577.45 601.36,577.34 602.19,577.23 603.02,577.09 603.85,576.94 604.68,576.77 605.51,576.57 606.34,576.35 607.17,576.10 608.00,575.82 608.83,575.51 609.66,575.16 610.49,574.76 611.32,574.32 612.15,573.84 612.98,573.29 613.81,572.69 614.63,572.03 615.46,571.30 616.29,570.49 617.12,569.61 617.95,568.64 618.78,567.57 619.61,566.42 620.44,565.16 621.27,563.79 622.10,562.31 622.93,560.70 623.76,558.98 624.59,557.12 625.42,555.12 626.25,552.98 627.08,550.69 627.91,548.26 628.74,545.67 629.57,542.92 630.39,540.01 631.22,536.94 632.05,533.70 632.88,530.31 633.71,526.75 634.54,523.04 635.37,519.17 636.20,515.14 637.03,510.97 637.86,506.67 638.69,502.23 639.52,497.67 640.35,492.99 641.18,488.22 642.01,483.36 642.84,478.43 643.67,473.45 644.50,468.42 645.33,463.38 646.15,458.33 646.98,453.30 647.81,448.30 648.64,443.37 649.47,438.51 650.30,433.76 651.13,429.13 651.96,424.64 652.79,420.32 653.62,416.19 654.45,412.27 655.28,408.58 656.11,405.14 656.94,401.96 657.77,399.08 658.60,396.49 659.43,394.21 660.26,392.27 661.09,390.66 661.91,389.40 662.74,388.49 663.57,387.95 664.40,387.77 665.23,387.95 666.06,388.49 666.89,389.40 667.72,390.66 668.55,392.27 669.38,394.21 670.21,396.49 671.04,399.08 671.87,401.96 672.70,405.14 673.53,408.58 674.36,412.27 675.19,416.19 676.02,420.32 676.85,424.64 677.67,429.13 678.50,433.76 679.33,438.51 680.16,443.37 680.99,448.30 681.82,453.30 682.65,458.33 683.48,463.38 684.31,468.42 685.14,473.45 685.97,478.43 686.80,483.36 687.63,488.22 688.46,492.99 689.29,497.67 690.12,502.23 690.95,506.67 691.78,510.97 692.61,515.14 693.43,519.17 694.26,523.04 695.09,526.75 695.92,530.31 696.75,533.70 697.58,536.94 698.41,540.01 699.24,542.92 700.07,545.67 700.90,548.26 701.73,550.69 702.56,552.98 703.39,555.12 704.22,557.12 705.05,558.98 705.88,560.70 706.71,562.31 707.54,563.79 708.37,565.16 709.19,566.42 710.02,567.57 710.85,568.64 711.68,569.61 712.51,570.49 713.34,571.30 714.17,572.03 715.00,572.69 715.83,573.29 716.66,573.84 717.49,574.32 718.32,574.76 719.15,575.16 719.98,575.51 720.81,575.82 721.64,576.10 722.47,576.35 723.30,576.57 724.13,576.77 724.95,576.94 725.78,577.09 726.61,577.23 727.44,577.34 728.27,577.45 729.10,577.54 729.93,577.62 730.76,577.68" fill="none" stroke="#3c3c3c" stroke-width="0.85"/><polyline points="594.79,577.70 595.66,577.64 596.53,577.56 597.40,577.48 598.27,577.38 599.14,577.27 600.01,577.14 600.88,576.99 601.75,576.83 602.62,576.64 603.49,576.43 604.36,576.20 605.23,575.93 606.10,575.63 606.97,575.29 607.84,574.92 608.71,574.50 609.58,574.03 610.45,573.52 611.32,572.95 612.19,572.31 613.06,571.62 613.93,570.85 614.80,570.00 615.67,569.08 616.54,568.07 617.41,566.96 618.28,565.76 619.15,564.46 620.02,563.05 620.89,561.52 621.76,559.87 622.64,558.10 623.51,556.19 624.38,554.15 625.25,551.98 626.12,549.65 626.99,547.18 627.86,544.56 628.73,541.79 629.60,538.86 630.47,535.78 631.34,532.54 632.21,529.15 633.08,525.61 633.95,521.92 634.82,518.09 635.69,514.11 636.56,510.01 637.43,505.78 638.30,501.43 639.17,496.97 640.04,492.42 640.91,487.79 641.78,483.10 642.65,478.34 643.52,473.55 644.39,468.74 645.26,463.93 646.13,459.14 647.00,454.37 647.87,449.67 648.74,445.04 649.61,440.51 650.48,436.09 651.35,431.82 652.22,427.70 653.09,423.76 653.96,420.03 654.83,416.51 655.70,413.23 656.57,410.20 657.44,407.45 658.31,404.98 659.18,402.81 660.05,400.96 660.92,399.43 661.79,398.23 662.66,397.36 663.53,396.84 664.40,396.67 665.27,396.84 666.14,397.36 667.01,398.23 667.88,399.43 668.75,400.96 669.62,402.81 670.49,404.98 671.36,407.45 672.23,410.20 673.10,413.23 673.98,416.51 674.85,420.03 675.72,423.76 676.59,427.70 677.46,431.82 678.33,436.09 679.20,440.51 680.07,445.04 680.94,449.67 681.81,454.37 682.68,459.14 683.55,463.93 684.42,468.74 685.29,473.55 686.16,478.34 687.03,483.10 687.90,487.79 688.77,492.42 689.64,496.97 690.51,501.43 691.38,505.78 692.25,510.01 693.12,514.11 693.99,518.09 694.86,521.92 695.73,525.61 696.60,529.15 697.47,532.54 698.34,535.78 699.21,538.86 700.08,541.79 700.95,544.56 701.82,547.18 702.69,549.65 703.56,551.98 704.43,554.15 705.30,556.19 706.17,558.10 707.04,559.87 707.91,561.52 708.78,563.05 709.65,564.46 710.52,565.76 711.39,566.96 712.26,568.07 713.13,569.08 714.00,570.00 714.87,570.85 715.74,571.62 716.61,572.31 717.48,572.95 718.35,573.52 719.22,574.03 720.09,574.50 720.96,574.92 721.83,575.29 722.70,575.63 723.57,575.93 724.45,576.20 725.32,576.43 726.19,576.64 727.06,576.83 727.93,576.99 728.80,577.14 729.67,577.27 730.54,577.38 731.41,577.48 732.28,577.56 733.15,577.64 734.02,577.70" fill="none" stroke="#dc5a5a" stroke-width="0.85"/><line x1="532" y1="566.4" x2="534" y2="566.4" stroke="#666" stroke-width="1"/><text x="530.5" y="569.0" text-anchor="end">0.2</text><line x1="532" y1="554.7" x2="534" y2="554.7" stroke="#666" stroke-width="1"/><text x="530.5" y="557.3" text-anchor="end">0.4</text><line x1="532" y1="543.0" x2="534" y2="543.0" stroke="#666" stroke-width="1"/><text x="530.5" y="545.6" text-anchor="end">0.6</text><line x1="532" y1="531.3" x2="534" y2="531.3" stroke="#666" stroke-width="1"/><text x="530.5" y="533.9" text-anchor="end">0.8</text><line x1="532" y1="519.6" x2="534" y2="519.6" stroke="#666" stroke-width="1"/><text x="530.5" y="522.2" text-anchor="end">1</text><line x1="532" y1="508.0" x2="534" y2="508.0" stroke="#666" stroke-width="1"/><text x="530.5" y="510.6" text-anchor="end">1.2</text><line x1="532" y1="496.3" x2="534" y2="496.3" stroke="#666" stroke-width="1"/><text x="530.5" y="498.9" text-anchor="end">1.4</text><line x1="532" y1="484.6" x2="534" y2="484.6" stroke="#666" stroke-width="1"/><text x="530.5" y="487.2" text-anchor="end">1.6</text><line x1="532" y1="472.9" x2="534" y2="472.9" stroke="#666" stroke-width="1"/><text x="530.5" y="475.5" text-anchor="end">1.8</text><line x1="532" y1="461.2" x2="534" y2="461.2" stroke="#666" stroke-width="1"/><text x="530.5" y="463.8" text-anchor="end">2</text><line x1="532" y1="449.5" x2="534" y2="449.5" stroke="#666" stroke-width="1"/><text x="530.5" y="452.1" text-anchor="end">2.2</text><line x1="532" y1="437.8" x2="534" y2="437.8" stroke="#666" stroke-width="1"/><text x="530.5" y="440.4" text-anchor="end">2.4</text><line x1="532" y1="426.1" x2="534" y2="426.1" stroke="#666" stroke-width="1"/><text x="530.5" y="428.7" text-anchor="end">2.6</text><line x1="532" y1="414.4" x2="534" y2="414.4" stroke="#666" stroke-width="1"/><text x="530.5" y="417.0" text-anchor="end">2.8</text><line x1="532" y1="402.8" x2="534" y2="402.8" stroke="#666" stroke-width="1"/><text x="530.5" y="405.4" text-anchor="end">3</text><line x1="532" y1="391.1" x2="534" y2="391.1" stroke="#666" stroke-width="1"/><text x="530.5" y="393.7" text-anchor="end">3.2</text><line x1="532" y1="379.4" x2="534" y2="379.4" stroke="#666" stroke-width="1"/><text x="530.5" y="382.0" text-anchor="end">3.4</text><line x1="532" y1="367.7" x2="534" y2="367.7" stroke="#666" stroke-width="1"/><text x="530.5" y="370.3" text-anchor="end">3.6</text><line x1="532" y1="356.0" x2="534" y2="356.0" stroke="#666" stroke-width="1"/><text x="530.5" y="358.6" text-anchor="end">3.8</text><line x1="537.6" y1="578" x2="537.6" y2="581" stroke="#666" stroke-width="1"/><text x="537.6" y="589" text-anchor="middle">6.44</text><line x1="571.5" y1="578" x2="571.5" y2="581" stroke="#666" stroke-width="1"/><text x="571.5" y="589" text-anchor="middle">6.46</text><line x1="605.5" y1="578" x2="605.5" y2="581" stroke="#666" stroke-width="1"/><text x="605.5" y="589" text-anchor="middle">6.48</text><line x1="639.4" y1="578" x2="639.4" y2="581" stroke="#666" stroke-width="1"/><text x="639.4" y="589" text-anchor="middle">6.5</text><line x1="673.4" y1="578" x2="673.4" y2="581" stroke="#666" stroke-width="1"/><text x="673.4" y="589" text-anchor="middle">6.52</text><line x1="707.3" y1="578" x2="707.3" y2="581" stroke="#666" stroke-width="1"/><text x="707.3" y="589" text-anchor="middle">6.54</text><line x1="741.3" y1="578" x2="741.3" y2="581" stroke="#666" stroke-width="1"/><text x="741.3" y="589" text-anchor="middle">6.56</text><line x1="755" y1="568.0" x2="757.5" y2="568.0" stroke="#666" stroke-width="1"/><text x="759" y="570.6">2</text><line x1="755" y1="557.4" x2="757.5" y2="557.4" stroke="#666" stroke-width="1"/><text x="759" y="560.0">4</text><line x1="755" y1="546.7" x2="757.5" y2="546.7" stroke="#666" stroke-width="1"/><text x="759" y="549.3">6</text><line x1="755" y1="536.0" x2="757.5" y2="536.0" stroke="#666" stroke-width="1"/><text x="759" y="538.6">8</text><line x1="755" y1="525.3" x2="757.5" y2="525.3" stroke="#666" stroke-width="1"/><text x="759" y="527.9">10</text><line x1="755" y1="514.7" x2="757.5" y2="514.7" stroke="#666" stroke-width="1"/><text x="759" y="517.3">12</text><line x1="755" y1="504.0" x2="757.5" y2="504.0" stroke="#666" stroke-width="1"/><text x="759" y="506.6">14</text><line x1="755" y1="493.3" x2="757.5" y2="493.3" stroke="#666" stroke-width="1"/><text x="759" y="495.9">16</text><line x1="755" y1="482.6" x2="757.5" y2="482.6" stroke="#666" stroke-width="1"/><text x="759" y="485.2">18</text><line x1="755" y1="472.0" x2="757.5" y2="472.0" stroke="#666" stroke-width="1"/><text x="759" y="474.6">20</text><line x1="755" y1="461.3" x2="757.5" y2="461.3" stroke="#666" stroke-width="1"/><text x="759" y="463.9">22</text><line x1="755" y1="450.6" x2="757.5" y2="450.6" stroke="#666" stroke-width="1"/><text x="759" y="453.2">24</text><line x1="755" y1="439.9" x2="757.5" y2="439.9" stroke="#666" stroke-width="1"/><text x="759" y="442.5">26</text><line x1="755" y1="429.2" x2="757.5" y2="429.2" stroke="#666" stroke-width="1"/><text x="759" y="431.9">28</text><line x1="755" y1="418.6" x2="757.5" y2="418.6" stroke="#666" stroke-width="1"/><text x="759" y="421.2">30</text><line x1="755" y1="407.9" x2="757.5" y2="407.9" stroke="#666" stroke-width="1"/><text x="759" y="410.5">32</text><line x1="755" y1="397.2" x2="757.5" y2="397.2" stroke="#666" stroke-width="1"/><text x="759" y="399.8">34</text></svg><div style="position:absolute;left:781px;top:93.5px;width:256px;height:247px;border-top:1px solid #cbbfc3;border-left:1px solid #8a8a8a;overflow:hidden"><div style="position:absolute;left:0;top:0.0px;width:255px;height:16.9px;background:#fcf9e3"></div><div style="position:absolute;left:0;top:33.8px;width:255px;height:16.9px;background:#fcf9e3"></div><div style="position:absolute;left:0;top:67.6px;width:255px;height:16.9px;background:#fcf9e3"></div><div style="position:absolute;left:0;top:101.4px;width:255px;height:16.9px;background:#fcf9e3"></div><div style="position:absolute;left:0;top:135.2px;width:255px;height:16.9px;background:#fcf9e3"></div><div style="position:absolute;left:0;top:169.0px;width:255px;height:16.9px;background:#fcf9e3"></div><div style="position:absolute;left:0;top:202.8px;width:255px;height:16.9px;background:#fcf9e3"></div><div style="position:absolute;left:0;top:0;width:50px;height:16.9px;background:#f4f4f0"></div><div class="pv" style="left:1.5px;top:5.2px"><span class="c">参数名称</span></div><div class="pv" style="left:51.5px;top:5.2px"><span class="c">平行距</span> 12: <span class="c">间距</span> (B1,B2,T3,#03,<span class="c">李一</span>,#02)</div><div class="pl" style="left:1.5px;top:22.1px"><span class="c">总样本数</span></div><div class="pv" style="left:51.5px;top:22.1px">7</div><div class="pl" style="left:101.5px;top:22.1px"><span class="c">子组大小</span></div><div class="pv" style="left:151.5px;top:22.1px">1</div><div class="pl" style="left:1.5px;top:39.0px"><span class="c">平均值</span></div><div class="pv" style="left:51.5px;top:39.0px">6.5099</div><div class="pl" style="left:101.5px;top:39.0px"><span class="c">最大值</span></div><div class="pv" style="left:151.5px;top:39.0px">6.521</div><div class="pl" style="left:201.5px;top:39.0px"><span class="c">最小值</span></div><div class="pv" style="left:251.5px;top:39.0px">6</div><div class="pl" style="left:1.5px;top:55.9px"><span class="c">上规格</span></div><div class="pv" style="left:51.5px;top:55.9px">6.555</div><div class="pl" style="left:101.5px;top:55.9px"><span class="c">目标值</span></div><div class="pv" style="left:151.5px;top:55.9px">6.5</div><div class="pl" style="left:201.5px;top:55.9px"><span class="c">下规格</span></div><div class="pv" style="left:251.5px;top:55.9px">6</div><div class="pl" style="left:1.5px;top:72.8px">+3Sigma</div><div class="pv" style="left:51.5px;top:72.8px">6.542</div><div class="pl" style="left:101.5px;top:72.8px">-3Sigma</div><div class="pv" style="left:151.5px;top:72.8px">6.478</div><div class="pl" style="left:51.5px;top:106.6px"><span class="c">组内</span></div><div class="pl" style="left:151.5px;top:106.6px"><span class="c">整体</span></div><div class="pl" style="left:1.5px;top:123.5px">STDEV</div><div class="pv" style="left:51.5px;top:123.5px">0.010668</div><div class="pv" style="left:151.5px;top:123.5px">0.010085</div><div class="pl" style="left:1.5px;top:140.4px">CPK</div><div class="pv" style="left:51.5px;top:140.4px">1.408</div><div class="pv" style="left:151.5px;top:140.4px">1.489</div><div class="pl" style="left:1.5px;top:157.3px">CP</div><div class="pv" style="left:51.5px;top:157.3px">1.719</div><div class="pv" style="left:151.5px;top:157.3px">1.818</div><div class="pl" style="left:1.5px;top:174.2px">CPL</div><div class="pv" style="left:51.5px;top:174.2px">2.029</div><div class="pv" style="left:151.5px;top:174.2px">2.147</div><div class="pl" style="left:1.5px;top:191.1px">CPU</div><div class="pv" style="left:51.5px;top:191.1px">1.408</div><div class="pv" style="left:151.5px;top:191.1px">1.489</div><div class="pl" style="left:1.5px;top:208.0px">PPM < LSL</div><div class="pv" style="left:51.5px;top:208.0px">0.001</div><div class="pv" style="left:151.5px;top:208.0px">0</div><div class="pv" style="left:251.5px;top:208.0px">0</div><div class="pl" style="left:1.5px;top:224.9px">PPM > USL</div><div class="pv" style="left:51.5px;top:224.9px">12.04</div><div class="pv" style="left:151.5px;top:224.9px">3.934</div><div class="pv" style="left:251.5px;top:224.9px">0</div></div><div style="position:absolute;left:782px;top:330px;width:254px;height:10px;background:#f0f0f0"><div style="position:absolute;left:11px;top:1px;width:236px;height:8px;background:#cdcdcd"></div><span class="a" style="left:3px;top:1px;font-size:7px;color:#555">&lt;</span></div><div style="position:absolute;left:781px;top:340px;width:256px;height:1px;background:#8a8a8a"></div><div style="position:absolute;left:781px;top:344px;width:256px;height:247px;border-top:1px solid #cbbfc3;border-left:1px solid #8a8a8a;overflow:hidden"><div style="position:absolute;left:0;top:0.0px;width:255px;height:16.9px;background:#fcf9e3"></div><div style="position:absolute;left:0;top:33.8px;width:255px;height:16.9px;background:#fcf9e3"></div><div style="position:absolute;left:0;top:67.6px;width:255px;height:16.9px;background:#fcf9e3"></div><div style="position:absolute;left:0;top:101.4px;width:255px;height:16.9px;background:#fcf9e3"></div><div style="position:absolute;left:0;top:135.2px;width:255px;height:16.9px;background:#fcf9e3"></div><div style="position:absolute;left:0;top:169.0px;width:255px;height:16.9px;background:#fcf9e3"></div><div style="position:absolute;left:0;top:202.8px;width:255px;height:16.9px;background:#fcf9e3"></div><div style="position:absolute;left:0;top:0;width:50px;height:16.9px;background:#f4f4f0"></div><div class="pv" style="left:1.5px;top:5.2px"><span class="c">参数名称</span></div><div class="pv" style="left:51.5px;top:5.2px"><span class="c">平行距</span> 14: <span class="c">间距</span> (B1,B2,T3,#03,<span class="c">李一</span>,#02)</div><div class="pl" style="left:1.5px;top:22.1px"><span class="c">总样本数</span></div><div class="pv" style="left:51.5px;top:22.1px">7</div><div class="pl" style="left:101.5px;top:22.1px"><span class="c">子组大小</span></div><div class="pv" style="left:151.5px;top:22.1px">1</div><div class="pl" style="left:1.5px;top:39.0px"><span class="c">平均值</span></div><div class="pv" style="left:51.5px;top:39.0px">6.5147</div><div class="pl" style="left:101.5px;top:39.0px"><span class="c">最大值</span></div><div class="pv" style="left:151.5px;top:39.0px">6.535</div><div class="pl" style="left:201.5px;top:39.0px"><span class="c">最小值</span></div><div class="pv" style="left:251.5px;top:39.0px">6</div><div class="pl" style="left:1.5px;top:55.9px"><span class="c">上规格</span></div><div class="pv" style="left:51.5px;top:55.9px">6.555</div><div class="pl" style="left:101.5px;top:55.9px"><span class="c">目标值</span></div><div class="pv" style="left:151.5px;top:55.9px">6.5</div><div class="pl" style="left:201.5px;top:55.9px"><span class="c">下规格</span></div><div class="pv" style="left:251.5px;top:55.9px">6</div><div class="pl" style="left:1.5px;top:72.8px">+3Sigma</div><div class="pv" style="left:51.5px;top:72.8px">6.55</div><div class="pl" style="left:101.5px;top:72.8px">-3Sigma</div><div class="pv" style="left:151.5px;top:72.8px">6.48</div><div class="pl" style="left:51.5px;top:106.6px"><span class="c">组内</span></div><div class="pl" style="left:151.5px;top:106.6px"><span class="c">整体</span></div><div class="pl" style="left:1.5px;top:123.5px">STDEV</div><div class="pv" style="left:51.5px;top:123.5px">0.011717</div><div class="pv" style="left:151.5px;top:123.5px">0.011169</div><div class="pl" style="left:1.5px;top:140.4px">CPK</div><div class="pv" style="left:51.5px;top:140.4px">1.148</div><div class="pv" style="left:151.5px;top:140.4px">1.204</div><div class="pl" style="left:1.5px;top:157.3px">CP</div><div class="pv" style="left:51.5px;top:157.3px">1.565</div><div class="pv" style="left:151.5px;top:157.3px">1.641</div><div class="pl" style="left:1.5px;top:174.2px">CPL</div><div class="pv" style="left:51.5px;top:174.2px">1.982</div><div class="pv" style="left:151.5px;top:174.2px">2.079</div><div class="pl" style="left:1.5px;top:191.1px">CPU</div><div class="pv" style="left:51.5px;top:191.1px">1.148</div><div class="pv" style="left:151.5px;top:191.1px">1.204</div><div class="pl" style="left:1.5px;top:208.0px">PPM < LSL</div><div class="pv" style="left:51.5px;top:208.0px">0.001</div><div class="pv" style="left:151.5px;top:208.0px">0</div><div class="pv" style="left:251.5px;top:208.0px">0</div><div class="pl" style="left:1.5px;top:224.9px">PPM > USL</div><div class="pv" style="left:51.5px;top:224.9px">287.533</div><div class="pv" style="left:151.5px;top:224.9px">151.932</div><div class="pv" style="left:251.5px;top:224.9px">0</div><div class="pl" style="left:1.5px;top:241.8px">PPM Total</div><div class="pv" style="left:51.5px;top:241.8px">287.534</div><div class="pv" style="left:151.5px;top:241.8px">151.932</div></div><svg style="position:absolute;left:603px;top:336px" width="10" height="14" viewBox="0 0 10 14"><path d="M0.7 0.7 V11 L3.1 8.7 L5 12.6 L6.6 11.9 L4.8 8.1 L8 8 Z" fill="#fff" stroke="#222" stroke-width="0.9" stroke-linejoin="round"/></svg></body></html>
